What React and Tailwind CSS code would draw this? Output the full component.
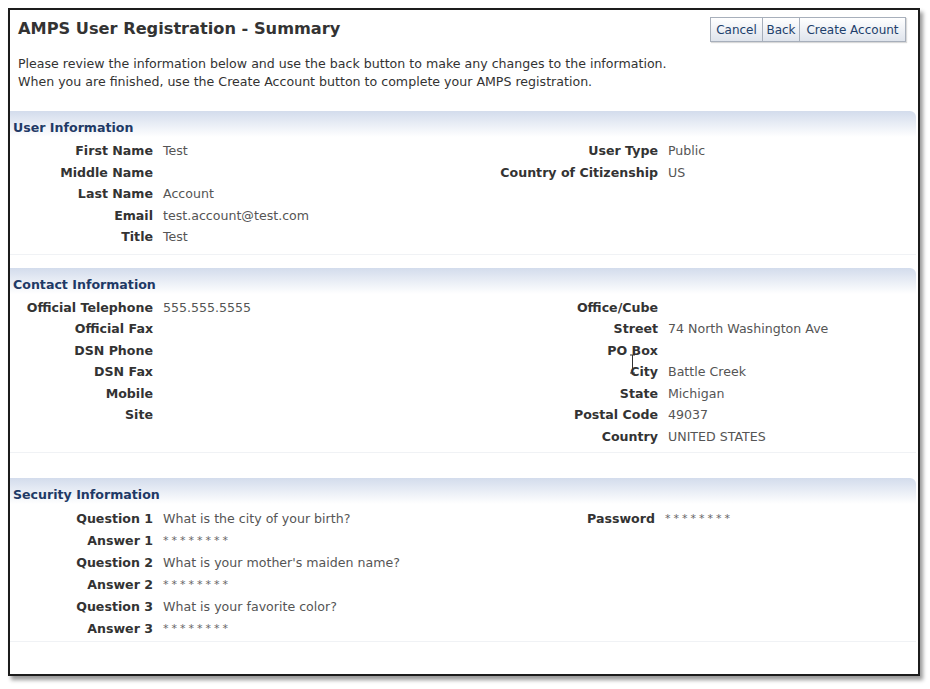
import React from 'react';

const userLeft = [
  ['First Name', 'Test'],
  ['Middle Name', ''],
  ['Last Name', 'Account'],
  ['Email', 'test.account@test.com'],
  ['Title', 'Test'],
];
const userRight = [
  ['User Type', 'Public'],
  ['Country of Citizenship', 'US'],
];
const contactLeft = [
  ['Official Telephone', '555.555.5555'],
  ['Official Fax', ''],
  ['DSN Phone', ''],
  ['DSN Fax', ''],
  ['Mobile', ''],
  ['Site', ''],
];
const contactRight = [
  ['Office/Cube', ''],
  ['Street', '74 North Washington Ave'],
  ['PO Box', ''],
  ['City', 'Battle Creek'],
  ['State', 'Michigan'],
  ['Postal Code', '49037'],
  ['Country', 'UNITED STATES'],
];
const securityLeft = [
  ['Question 1', 'What is the city of your birth?'],
  ['Answer 1', '********'],
  ['Question 2', "What is your mother's maiden name?"],
  ['Answer 2', '********'],
  ['Question 3', 'What is your favorite color?'],
  ['Answer 3', '********'],
];

const Rows = ({ rows, labelW, rowH }) => (
  <div>
    {rows.map(([label, value]) => (
      <div key={label} className={`flex items-center ${rowH}`}>
        <span className={`${labelW} shrink-0 text-right font-bold text-[#333]`}>{label}</span>
        <span className={value === '********' ? 'pl-[10px] text-[11px] tracking-[3px] text-[#666]' : 'pl-[10px] text-[#555]'}>
          {value}
        </span>
      </div>
    ))}
  </div>
);

const Section = ({ title, left, right, rowH, bodyClass, rightLabelW = 'w-[193px]' }) => (
  <div>
    <div className="h-[26px] mr-[2px] rounded-tr-[6px] bg-gradient-to-b from-[#d3dcec] to-white pl-[3px] pt-[9px] leading-[16px] font-bold text-[#1f3a66]">
      {title}
    </div>
    <div className={`flex mr-[2px] border-b border-[#f0f2f5] bg-white ${bodyClass}`}>
      <div className="w-[455px] shrink-0">
        <Rows rows={left} labelW="w-[143px]" rowH={rowH} />
      </div>
      <div className="flex-1">
        <Rows rows={right} labelW={rightLabelW} rowH={rowH} />
      </div>
    </div>
  </div>
);

export default function App() {
  return (
    <div className="min-h-screen bg-white pl-[8px] pt-[8px] text-[12.6px] font-['DejaVu_Sans',sans-serif]">
      <div className="relative w-[912px] h-[668px] border-2 border-[#1c1c1c] bg-white shadow-[3px_4px_4px_rgba(0,0,0,0.4)]">
        {/* Title bar */}
        <div className="flex items-center justify-between h-[25px] mt-[7px] pl-[8px] pr-[12px]">
          <h1 className="text-[16.2px] font-bold text-[#333]">AMPS User Registration - Summary</h1>
          <div className="flex h-[25px] border border-[#a7afbb] bg-gradient-to-b from-white to-[#dfe4ec] text-[12px] text-[#213f6b] shadow-[1px_1px_1px_rgba(0,0,0,0.15)]">
            <button className="w-[52px] border-r border-[#a7afbb]">Cancel</button>
            <button className="w-[37px] border-r border-[#a7afbb]">Back</button>
            <button className="w-[105px]">Create Account</button>
          </div>
        </div>

        <p className="mt-[13px] pl-[8px] leading-[18px] text-[#333]">
          Please review the information below and use the back button to make any changes to the information.
          <br />
          When you are finished, use the Create Account button to complete your AMPS registration.
        </p>

        <div className="mt-[20px]">
          <Section title="User Information" left={userLeft} right={userRight} rowH="h-[21.5px]" bodyClass="pt-[4px] pb-[5px]" />
        </div>
        <div className="mt-[13px]">
          <Section title="Contact Information" left={contactLeft} right={contactRight} rowH="h-[21.5px]" bodyClass="pt-[4px] pb-[4px]" />
        </div>
        <div className="mt-[25px]">
          <Section
            title="Security Information"
            left={securityLeft}
            right={[['Password', '********']]}
            rowH="h-[22px]"
            rightLabelW="w-[190px]"
            bodyClass="pt-[4px] pb-[1px]"
          />
        </div>

        {/* mouse cursor over PO Box */}
        <svg className="absolute left-[619px] top-[344px]" width="8" height="20" viewBox="0 0 8 20">
          <path d="M1 1h2.5v18H1M6 1H3.5M6 19H3.5" fill="none" stroke="#333" strokeWidth="1" />
        </svg>
      </div>
    </div>
  );
}
